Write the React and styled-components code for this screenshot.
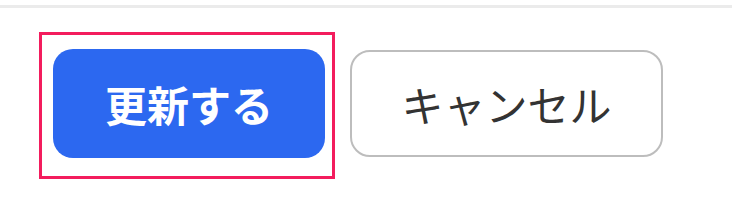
import React from "react";
import styled, { createGlobalStyle } from "styled-components";

const Global = createGlobalStyle`
  html, body { margin: 0; padding: 0; background: #ffffff; }
  body { font-family: "Noto Sans CJK JP", "Noto Sans", sans-serif; }
`;

const Page = styled.div`
  width: 732px;
  height: 202px;
  background: #fff;
  overflow: hidden;
`;

const TopRule = styled.div`
  height: 5px;
  border-bottom: 3px solid #ebebeb;
`;

const Actions = styled.div`
  display: flex;
  align-items: flex-start;
  gap: 15px;
  padding: 24px 0 0 39px;
`;

const Highlight = styled.div`
  display: flex;
  border: 3px solid #f31c5d;
  padding: 14px 7px 18px 11px;
`;

const Button = styled.button`
  box-sizing: border-box;
  font-family: "Noto Sans CJK JP", "Noto Sans", sans-serif;
  font-size: 42px;
  line-height: 60px;
  border-radius: 20px;
  cursor: pointer;
  white-space: nowrap;
  ${({ $primary }) =>
    $primary
      ? `
    width: 272px;
    height: 109px;
    padding: 0;
    background: #2c68f0;
    color: #ffffff;
    font-weight: 700;
    border: none;
  `
      : `
    width: 313px;
    height: 107px;
    margin-top: 18px;
    padding: 0;
    background: #ffffff;
    color: #333333;
    font-weight: 400;
    border: 2px solid #bdbdbd;
  `}
`;

export default function App() {
  return (
    <Page>
      <Global />
      <TopRule />
      <Actions>
        <Highlight>
          <Button $primary>更新する</Button>
        </Highlight>
        <Button>キャンセル</Button>
      </Actions>
    </Page>
  );
}
